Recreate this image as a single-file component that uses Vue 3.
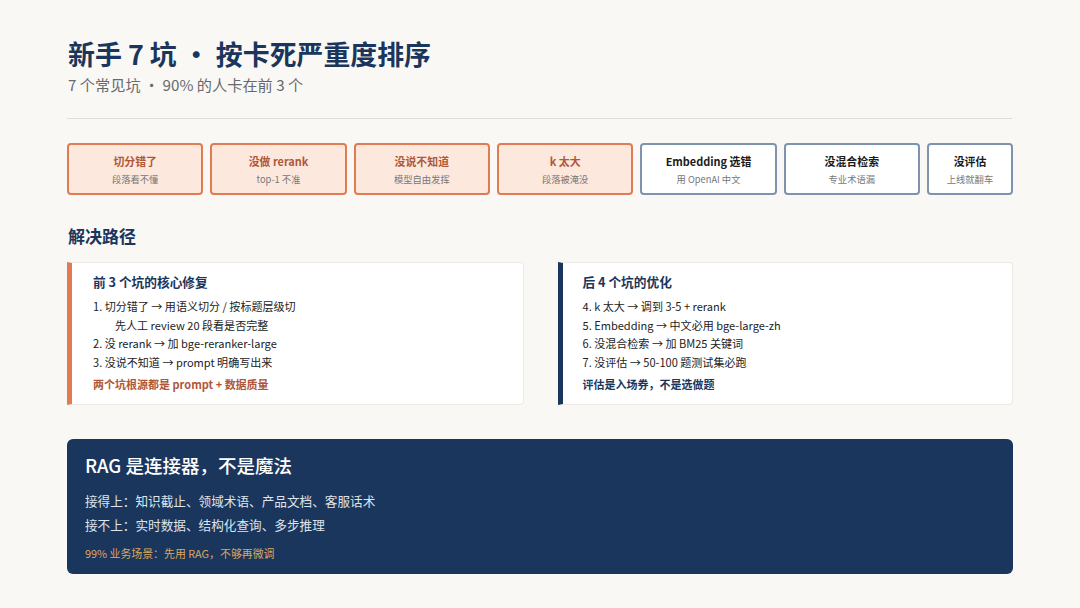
<template>
  <div class="slide">
    <header class="head">
      <h1>新手 7 坑 · 按卡死严重度排序</h1>
      <p class="sub">7 个常见坑 · 90% 的人卡在前 3 个</p>
    </header>

    <div class="pits">
      <div v-for="p in pits" :key="p.title" class="pit" :class="{ hot: p.hot }">
        <div class="pit-title">{{ p.title }}</div>
        <div class="pit-note">{{ p.note }}</div>
      </div>
    </div>

    <h2>解决路径</h2>

    <div class="cards">
      <div v-for="c in cards" :key="c.title" class="card" :class="c.cls">
        <div class="card-title">{{ c.title }}</div>
        <div v-for="l in c.lines" :key="l" class="line" :class="{ indent: l.startsWith('先人工') }">{{ l }}</div>
        <div class="card-foot">{{ c.foot }}</div>
      </div>
    </div>

    <div class="banner">
      <div class="banner-title">RAG 是连接器，不是魔法</div>
      <div class="banner-line">接得上：知识截止、领域术语、产品文档、客服话术</div>
      <div class="banner-line">接不上：实时数据、结构化查询、多步推理</div>
      <div class="banner-foot">99% 业务场景：先用 RAG，不够再微调</div>
    </div>
  </div>
</template>

<script setup>
const pits = [
  { title: '切分错了', note: '段落看不懂', hot: true },
  { title: '没做 rerank', note: 'top-1 不准', hot: true },
  { title: '没说不知道', note: '模型自由发挥', hot: true },
  { title: 'k 太大', note: '段落被淹没', hot: true },
  { title: 'Embedding 选错', note: '用 OpenAI 中文' },
  { title: '没混合检索', note: '专业术语漏' },
  { title: '没评估', note: '上线就翻车' },
]

const cards = [
  {
    cls: 'left',
    title: '前 3 个坑的核心修复',
    lines: [
      '1. 切分错了 → 用语义切分 / 按标题层级切',
      '先人工 review 20 段看是否完整',
      '2. 没 rerank → 加 bge-reranker-large',
      '3. 没说不知道 → prompt 明确写出来',
    ],
    foot: '两个坑根源都是 prompt + 数据质量',
  },
  {
    cls: 'right',
    title: '后 4 个坑的优化',
    lines: [
      '4. k 太大 → 调到 3-5 + rerank',
      '5. Embedding → 中文必用 bge-large-zh',
      '6. 没混合检索 → 加 BM25 关键词',
      '7. 没评估 → 50-100 题测试集必跑',
    ],
    foot: '评估是入场券，不是选做题',
  },
]
</script>

<style>
body {
  background: #faf8f5;
}
</style>

<style scoped>
.slide {
  width: 1080px;
  height: 608px;
  box-sizing: border-box;
  padding: 34px 67px 0;
  background: #faf8f5;
  font-family: "Noto Sans CJK SC", sans-serif;
  overflow: hidden;
}

.head {
  height: 84px;
  padding-left: 1px;
  margin-right: 1px;
  border-bottom: 1.5px solid #dfded6;
}

h1 {
  margin: 0;
  font-size: 26.9px;
  line-height: 40px;
  font-weight: 700;
  color: #1a365d;
}

.sub {
  margin: -1px 0 0;
  font-size: 15.2px;
  line-height: 22px;
  color: #666a70;
}

.pits {
  display: flex;
  gap: 7px;
  margin-top: 23.5px;
}

.pit {
  flex: 1 1 0;
  height: 52px;
  box-sizing: border-box;
  border: 2px solid #8093ae;
  border-radius: 4px;
  background: #fff;
  text-align: center;
  padding-top: 7px;
}

.pit:last-child {
  flex: 0 0 86px;
}

.pit.hot {
  border-color: #e07b54;
  background: #fde8dd;
}

.pit-title {
  font-size: 10.9px;
  line-height: 18px;
  font-weight: 700;
  color: #1a1a1a;
  margin-bottom: 2px;
}

.hot .pit-title {
  color: #b0573a;
}

.pit-note {
  font-size: 9.3px;
  line-height: 15px;
  color: #777;
}

h2 {
  margin: 28px 0 0 1px;
  font-size: 17px;
  line-height: 26px;
  font-weight: 700;
  color: #1a365d;
}

.cards {
  display: flex;
  gap: 34px;
  margin-top: 13.5px;
}

.card {
  flex: 1 1 0;
  height: 143px;
  box-sizing: border-box;
  padding: 9px 20px 0;
  background: #fff;
  border: 1px solid #edebe6;
  border-left: 5px solid #e07b54;
  border-radius: 0 4px 4px 0;
}

.card.left {
  padding-left: 21px;
}

.card.right {
  border-left-color: #1a365d;
}

.card-title {
  font-size: 12.7px;
  line-height: 20px;
  font-weight: 700;
  color: #1a365d;
  margin-bottom: 5px;
}

.line {
  font-size: 11.05px;
  line-height: 18.5px;
  color: #222;
}

.line.indent {
  padding-left: 22px;
}

.card-foot {
  margin-top: 3.5px;
  font-size: 11px;
  line-height: 18px;
  font-weight: 700;
  color: #b0573a;
}

.right .card-foot {
  color: #1a365d;
}

.banner {
  margin-top: 34px;
  height: 135px;
  box-sizing: border-box;
  padding: 12px 18px 0;
  background: #1a365d;
  border-radius: 6px;
}

.banner-title {
  font-size: 18.5px;
  line-height: 28px;
  font-weight: 500;
  color: #fff;
  margin-bottom: 10px;
}

.banner-line {
  font-size: 12.63px;
  line-height: 23.5px;
  color: #dfe5ec;
}

.banner-foot {
  margin-top: 7px;
  font-size: 10.9px;
  line-height: 20px;
  color: #dca760;
}
</style>
